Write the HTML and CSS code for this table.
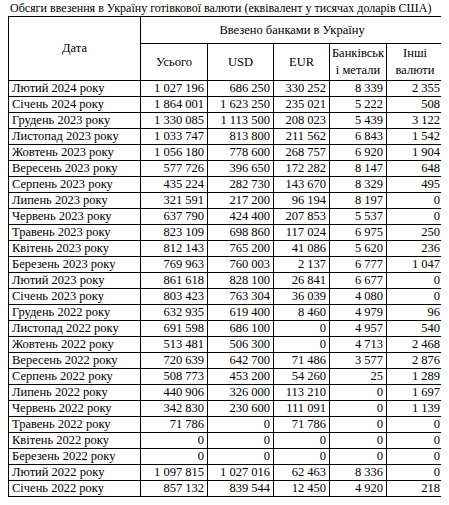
FILE: index.html
```html
<!DOCTYPE HTML>
<html>
<head>
    <title>Обсяги ввезення готівкової валюти</title>
    <link rel="stylesheet" href="styles.css">
</head>
<body>
<p class="caption">Обсяги ввезення в Україну готівкової валюти (еквівалент у тисячах доларів США)</p>
<table class="import_table">
    <colgroup>
        <col class="col_date">
        <col class="col_total">
        <col class="col_usd">
        <col class="col_eur">
        <col class="col_metal">
        <col class="col_other">
    </colgroup>
    <thead>
        <tr class="head_top">
            <th rowspan="2">Дата</th>
            <th colspan="5">Ввезено банками в Україну</th>
        </tr>
        <tr class="head_sub">
            <th>Усього</th>
            <th>USD</th>
            <th>EUR</th>
            <th class="two_lines">Банківськ<br>і метали</th>
            <th class="two_lines">Інші<br>валюти</th>
        </tr>
    </thead>
    <tbody>
        <tr><td>Лютий 2024 року</td><td>1 027 196</td><td>686 250</td><td>330 252</td><td>8 339</td><td>2 355</td></tr>
        <tr><td>Січень 2024 року</td><td>1 864 001</td><td>1 623 250</td><td>235 021</td><td>5 222</td><td>508</td></tr>
        <tr><td>Грудень 2023 року</td><td>1 330 085</td><td>1 113 500</td><td>208 023</td><td>5 439</td><td>3 122</td></tr>
        <tr><td>Листопад 2023 року</td><td>1 033 747</td><td>813 800</td><td>211 562</td><td>6 843</td><td>1 542</td></tr>
        <tr><td>Жовтень 2023 року</td><td>1 056 180</td><td>778 600</td><td>268 757</td><td>6 920</td><td>1 904</td></tr>
        <tr><td>Вересень 2023 року</td><td>577 726</td><td>396 650</td><td>172 282</td><td>8 147</td><td>648</td></tr>
        <tr><td>Серпень 2023 року</td><td>435 224</td><td>282 730</td><td>143 670</td><td>8 329</td><td>495</td></tr>
        <tr><td>Липень 2023 року</td><td>321 591</td><td>217 200</td><td>96 194</td><td>8 197</td><td>0</td></tr>
        <tr><td>Червень 2023 року</td><td>637 790</td><td>424 400</td><td>207 853</td><td>5 537</td><td>0</td></tr>
        <tr><td>Травень 2023 року</td><td>823 109</td><td>698 860</td><td>117 024</td><td>6 975</td><td>250</td></tr>
        <tr><td>Квітень 2023 року</td><td>812 143</td><td>765 200</td><td>41 086</td><td>5 620</td><td>236</td></tr>
        <tr><td>Березень 2023 року</td><td>769 963</td><td>760 003</td><td>2 137</td><td>6 777</td><td>1 047</td></tr>
        <tr><td>Лютий 2023 року</td><td>861 618</td><td>828 100</td><td>26 841</td><td>6 677</td><td>0</td></tr>
        <tr><td>Січень 2023 року</td><td>803 423</td><td>763 304</td><td>36 039</td><td>4 080</td><td>0</td></tr>
        <tr><td>Грудень 2022 року</td><td>632 935</td><td>619 400</td><td>8 460</td><td>4 979</td><td>96</td></tr>
        <tr><td>Листопад 2022 року</td><td>691 598</td><td>686 100</td><td>0</td><td>4 957</td><td>540</td></tr>
        <tr><td>Жовтень 2022 року</td><td>513 481</td><td>506 300</td><td>0</td><td>4 713</td><td>2 468</td></tr>
        <tr><td>Вересень 2022 року</td><td>720 639</td><td>642 700</td><td>71 486</td><td>3 577</td><td>2 876</td></tr>
        <tr><td>Серпень 2022 року</td><td>508 773</td><td>453 200</td><td>54 260</td><td>25</td><td>1 289</td></tr>
        <tr><td>Липень 2022 року</td><td>440 906</td><td>326 000</td><td>113 210</td><td>0</td><td>1 697</td></tr>
        <tr><td>Червень 2022 року</td><td>342 830</td><td>230 600</td><td>111 091</td><td>0</td><td>1 139</td></tr>
        <tr><td>Травень 2022 року</td><td>71 786</td><td>0</td><td>71 786</td><td>0</td><td>0</td></tr>
        <tr><td>Квітень 2022 року</td><td>0</td><td>0</td><td>0</td><td>0</td><td>0</td></tr>
        <tr><td>Березень 2022 року</td><td>0</td><td>0</td><td>0</td><td>0</td><td>0</td></tr>
        <tr><td>Лютий 2022 року</td><td>1 097 815</td><td>1 027 016</td><td>62 463</td><td>8 336</td><td>0</td></tr>
        <tr><td>Січень 2022 року</td><td>857 132</td><td>839 544</td><td>12 450</td><td>4 920</td><td>218</td></tr>
    </tbody>
</table>
</body>
</html>
```

FILE: styles.css
```css
html {
    background-color: #fff;
}

body {
    margin: 1px 8px 0 8px;
    font-family: "Liberation Serif", "Times New Roman", serif;
    font-size: 12.5px;
    color: #000;
}

.caption {
    margin: 0 0 0 2px;
    height: 15px;
    font-size: 12px;
    line-height: 15px;
    white-space: nowrap;
}

.import_table {
    border-collapse: collapse;
    table-layout: fixed;
    width: 435px;
    font-size: 12.5px;
}

.col_date {
    width: 132px;
}

.col_total {
    width: 67px;
}

.col_usd {
    width: 66px;
}

.col_eur {
    width: 56px;
}

.col_metal {
    width: 57px;
}

.col_other {
    width: 57px;
}

.import_table th, .import_table td {
    border: 1px solid #000;
    padding: 0 3px;
    line-height: 15px;
    white-space: nowrap;
    overflow: hidden;
}

.import_table th {
    font-weight: normal;
    text-align: center;
    vertical-align: middle;
}

.head_top {
    height: 27px;
}

.head_sub {
    height: 37px;
}

.import_table th.two_lines {
    padding: 0 1px;
    line-height: 17px;
}

.import_table tbody tr {
    height: 16px;
}

.import_table td {
    text-align: right;
}

.import_table td:first-child {
    text-align: left;
}
```
